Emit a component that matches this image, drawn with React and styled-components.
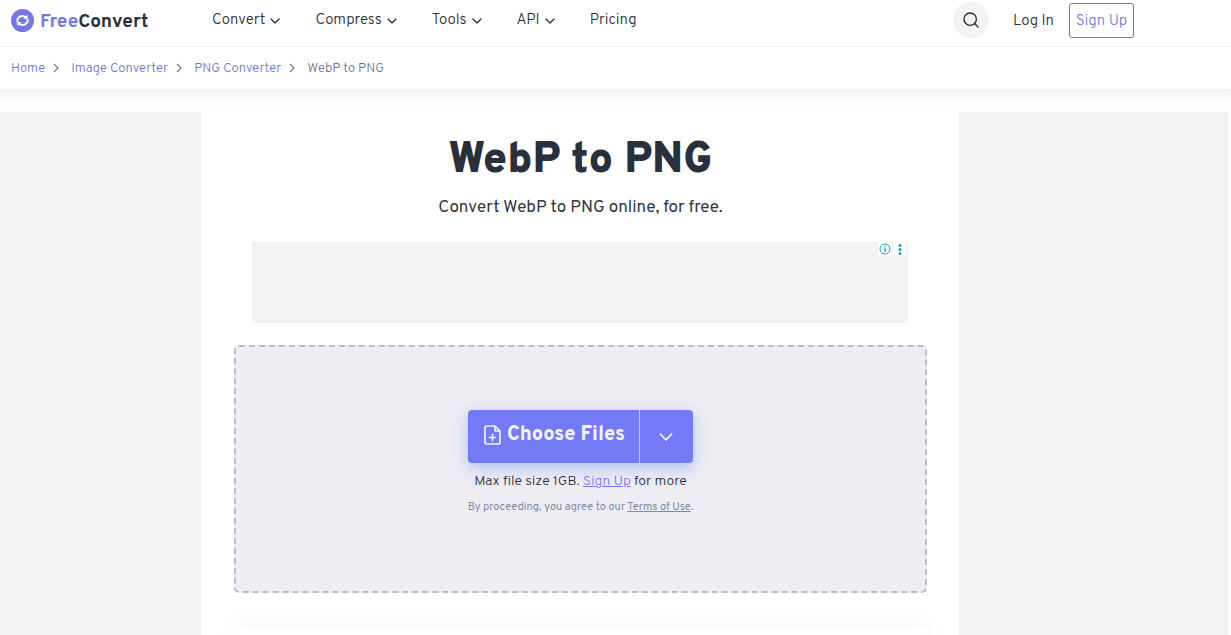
import React from "react";
import styled, { createGlobalStyle } from "styled-components";

const GlobalStyle = createGlobalStyle`
  *, *::before, *::after { box-sizing: border-box; }
  body {
    margin: 0;
    background: #fff;
    color: #29303d;
    font-family: Overpass, Roboto, "Liberation Sans", sans-serif;
  }
  button { font-family: inherit; cursor: pointer; }
`;

const Page = styled.div`
  display: flex;
  flex-direction: column;
  min-height: 100vh;
`;

const Header = styled.header`
  display: flex;
  align-items: center;
  height: 47px;
  padding: 0 97px 6px 11px;
  border-bottom: 1px solid #f0f0f1;
`;

const Logo = styled.a`
  display: flex;
  align-items: center;
  gap: 6px;
  width: 201px;
  color: #29303d;
  font-size: 19px;
  font-weight: 700;
  line-height: 24px;
  text-decoration: none;

  span { padding-top: 4px; }

  em {
    color: #7577e6;
    font-style: normal;
  }
`;

const Nav = styled.nav`
  display: flex;
  flex: 1;
  gap: 35px;
`;

const NavButton = styled.button`
  display: flex;
  align-items: center;
  gap: 5px;
  padding: 2px 0 0;
  border: 0;
  background: none;
  color: #292b31;
  font-size: 15px;
  font-weight: 300;
  line-height: 20px;
`;

const TextLink = styled.a`
  padding-top: 2px;
  color: #292b31;
  font-size: 15px;
  font-weight: 300;
  line-height: 20px;
  text-decoration: none;
`;

const Account = styled.div`
  display: flex;
  align-items: center;
  gap: 15px;

  ${TextLink} { padding-top: 4px; }
`;

const SearchButton = styled.button`
  display: grid;
  place-items: center;
  width: 36px;
  height: 36px;
  margin-right: 9px;
  padding: 0;
  border: 0;
  border-radius: 50%;
  background: #f4f3f3;
  color: #29303d;
`;

const SignUpButton = styled.a`
  width: 65px;
  padding: 8px 0 5px;
  border: 1px solid #7479c4;
  border-radius: 3px;
  color: #7377dc;
  font-size: 15px;
  font-weight: 300;
  line-height: 20px;
  text-align: center;
  text-decoration: none;
`;

const Breadcrumbs = styled.nav`
  position: relative;
  padding: 0 11px;
  background: #fff;
  box-shadow: 0 -24px 24px 24px rgba(0, 0, 0, 0.1);
  clip-path: inset(0 0 -23px 0);

  ol {
    display: flex;
    align-items: center;
    height: 42px;
    margin: 0;
    padding: 0;
    list-style: none;
  }
`;

const Crumb = styled.li`
  display: flex;
  align-items: center;
  padding-top: 2px;
  color: #6c7590;
  font-size: 13px;
  font-weight: 300;
  line-height: 18px;

  a {
    color: #7175d8;
    text-decoration: none;
  }

  svg {
    margin: 0 11px 3px 7px;
  }
`;

const Body = styled.div`
  display: flex;
  flex: 1;
  margin: 23px 3px 0 0;
`;

const SideAd = styled.aside`
  flex: 0 0 ${(p) => p.$width}px;
  background: #f3f3f3;
`;

const Main = styled.main`
  display: flex;
  flex: 1;
  flex-direction: column;
  min-width: 0;
  padding: 24px 31px 0 32px;
`;

const Title = styled.h1`
  margin: 0;
  font-size: 43px;
  font-weight: 900;
  line-height: 50px;
  text-align: center;
`;

const Subtitle = styled.p`
  margin: 10px 0 21px;
  color: #33353b;
  font-size: 17px;
  font-weight: 400;
  line-height: 25px;
  text-align: center;
`;

const BannerAd = styled.div`
  display: flex;
  align-items: flex-start;
  justify-content: flex-end;
  gap: 1px;
  height: 81px;
  margin: 0 19px 22px 18px;
  padding-right: 2px;
  background: #f3f3f3;
`;

const AdButton = styled.button`
  display: grid;
  place-items: center;
  width: ${(p) => p.$width}px;
  height: 14px;
  padding: 0;
  border: 0;
  background: #fff;
  color: #17a2b8;
`;

const DropZone = styled.section`
  display: flex;
  flex-direction: column;
  align-items: center;
  min-height: 248px;
  padding: 63px 16px 0;
  border: 2px dashed #bdbccd;
  border-radius: 5px;
  background: #eeedf3;
`;

const ButtonGroup = styled.div`
  display: flex;
  height: 53px;
  border-radius: 4px;
  background: #727af5;
  box-shadow: 0 5px 16px rgba(114, 150, 250, 0.5);
`;

const ChooseButton = styled.button`
  display: flex;
  align-items: center;
  justify-content: center;
  gap: 6px;
  width: 171px;
  padding: 0 0 4px 2px;
  border: 0;
  background: none;
  color: #f2f3ff;
  font-size: 20px;
  font-weight: 800;
  line-height: 26px;

  svg { margin-top: 1px; }
`;

const SourceButton = styled.button`
  display: grid;
  place-items: center;
  width: 54px;
  padding: 0 2px 0 0;
  border: 0;
  border-left: 1px solid #c3c8fb;
  background: none;
  color: #f2f3ff;
`;

const Limit = styled.p`
  margin: 9px 0 0;
  font-size: 14px;
  font-weight: 300;
  line-height: 20px;

  a { color: #727af0; }
`;

const Terms = styled.p`
  margin: 7px 0 0;
  color: #7f8aa3;
  font-size: 11px;
  font-weight: 400;
  line-height: 16px;

  a { color: inherit; }
`;

const Card = styled.section`
  flex: 1;
  min-height: 7px;
  margin-top: 35px;
  border-radius: 4px 4px 0 0;
  background: #fff;
  box-shadow: 0 0 24px rgba(0, 0, 0, 0.1);
`;

const Chevron = ({ size = 10, weight = 1.3 }) => (
  <svg width={size} height={size} viewBox="0 0 10 10" fill="none" stroke="currentColor"
    strokeWidth={weight} strokeLinecap="round" strokeLinejoin="round" aria-hidden="true">
    <path d="M1 3 5 7 9 3" />
  </svg>
);

const Separator = () => (
  <svg width="8" height="10" viewBox="0 0 8 10" fill="none" stroke="#77809a" strokeWidth="1.3" aria-hidden="true">
    <path d="M2 1 6 5 2 9" />
  </svg>
);

const LogoMark = () => (
  <svg width="23" height="23" viewBox="0 0 23 23" fill="none" aria-hidden="true">
    <circle cx="11.5" cy="11.5" r="11.5" fill="#7577e6" />
    <path d="M6.3 13.2C5.6 9.4 8.6 6.6 12.4 7.1L15.2 8.2M16.7 9.8C17.4 13.6 14.4 16.4 10.6 15.9L7.8 14.8" stroke="#fff" strokeWidth="1.9" />
    <path d="M16.6 5.8V10.2L12.4 9.4ZM6.4 17.2V12.8L10.6 13.6Z" fill="#fff" />
  </svg>
);

const menus = ["Convert", "Compress", "Tools", "API"];
const trail = ["Home", "Image Converter", "PNG Converter"];

export default function App() {
  return (
    <Page>
      <GlobalStyle />
      <Header>
        <Logo href="#">
          <LogoMark />
          <span><em>Free</em>Convert</span>
        </Logo>
        <Nav aria-label="Main">
          {menus.map((name) => (
            <NavButton key={name} type="button">
              {name}
              <Chevron />
            </NavButton>
          ))}
          <TextLink href="#">Pricing</TextLink>
        </Nav>
        <Account>
          <SearchButton type="button" aria-label="Search">
            <svg width="16" height="16" viewBox="0 0 16 16" fill="none" stroke="currentColor" strokeWidth="1.4" strokeLinecap="round">
              <circle cx="7.2" cy="7.2" r="6.2" />
              <path d="m11.8 11.8 3.2 3.2" />
            </svg>
          </SearchButton>
          <TextLink href="#">Log In</TextLink>
          <SignUpButton href="#">Sign Up</SignUpButton>
        </Account>
      </Header>

      <Breadcrumbs aria-label="Breadcrumb">
        <ol>
          {trail.map((name) => (
            <Crumb key={name}>
              <a href="#">{name}</a>
              <Separator />
            </Crumb>
          ))}
          <Crumb aria-current="page">WebP to PNG</Crumb>
        </ol>
      </Breadcrumbs>

      <Body>
        <SideAd $width={202} />
        <Main>
          <Title>WebP to PNG</Title>
          <Subtitle>Convert WebP to PNG online, for free.</Subtitle>

          <BannerAd>
            <AdButton type="button" $width={14} aria-label="Ad information">
              <svg width="12" height="12" viewBox="0 0 12 12" fill="none" stroke="currentColor">
                <circle cx="6" cy="6" r="5" />
                <path d="M6 5.2V9M6 2.8v1.4" strokeWidth="1.4" />
              </svg>
            </AdButton>
            <AdButton type="button" $width={13} aria-label="Ad options">
              <svg width="4" height="11" viewBox="0 0 4 11" fill="currentColor">
                <circle cx="2" cy="1.6" r="1.5" />
                <circle cx="2" cy="5.5" r="1.5" />
                <circle cx="2" cy="9.4" r="1.5" />
              </svg>
            </AdButton>
          </BannerAd>

          <DropZone>
            <ButtonGroup>
              <ChooseButton type="button">
                <svg width="17" height="20" viewBox="0 0 17 20" fill="none" stroke="currentColor" strokeWidth="1.7"
                  strokeLinecap="round" strokeLinejoin="round" aria-hidden="true">
                  <path d="M11 1H3Q1 1 1 3v14q0 2 2 2h11q2 0 2-2V6ZM11 1v5h5M8.5 9.5v6M5.5 12.5h6" />
                </svg>
                Choose Files
              </ChooseButton>
              <SourceButton type="button" aria-label="Choose a source">
                <Chevron size={14} weight={1.2} />
              </SourceButton>
            </ButtonGroup>
            <Limit>Max file size 1GB. <a href="#">Sign Up</a> for more</Limit>
            <Terms>By proceeding, you agree to our <a href="#">Terms of Use</a>.</Terms>
          </DropZone>

          <Card />
        </Main>
        <SideAd $width={270} />
      </Body>
    </Page>
  );
}
